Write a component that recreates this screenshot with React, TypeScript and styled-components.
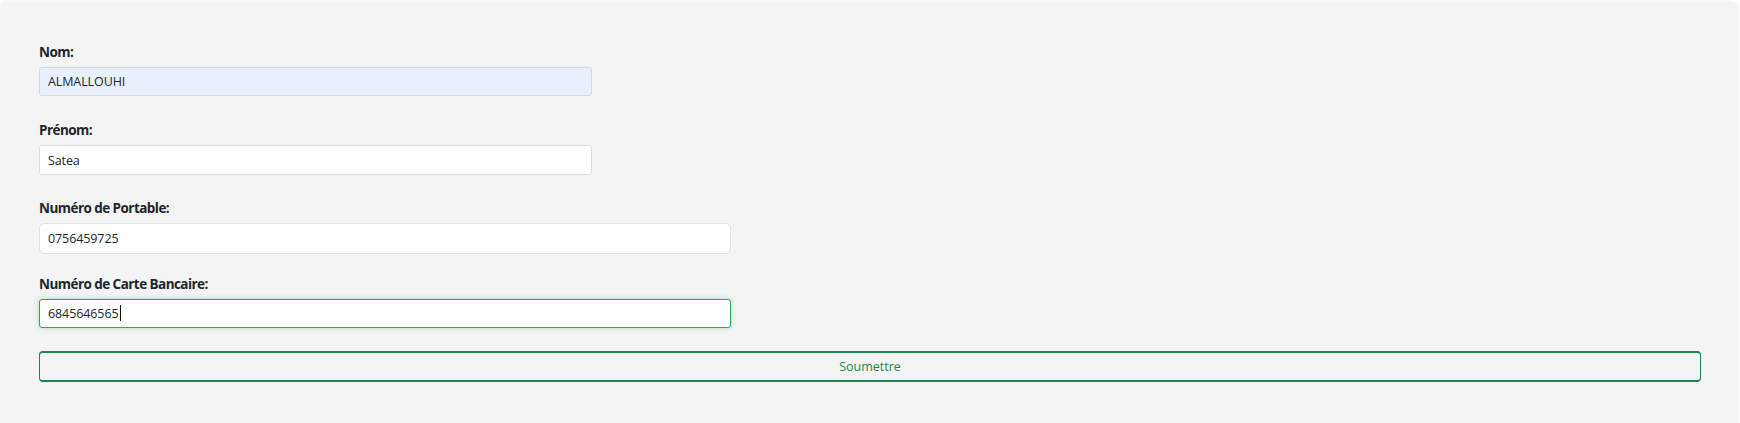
import React from "react";
import styled, { createGlobalStyle, css } from "styled-components";

const Global = createGlobalStyle`
  html, body { margin: 0; padding: 0; background: #ffffff; }
  body { font-family: "Open Sans", "Noto Sans", Arial, sans-serif; color: #212529; }
`;

const Card = styled.div`
  box-sizing: border-box;
  margin: 1px 2px 0 0;
  background: #f4f4f4;
  border-radius: 8px;
  box-shadow: 0 0 3px rgba(0, 0, 0, 0.08);
  padding: 41px 37px 42px 39px;
  min-height: 430px;
`;

const Form = styled.form`
  display: flex;
  flex-direction: column;
`;

const Field = styled.div<{ $gap: number }>`
  display: flex;
  flex-direction: column;
  align-items: flex-start;
  margin-bottom: ${(p) => p.$gap}px;
`;

const Label = styled.label`
  font-family: "Open Sans", "Noto Sans", Arial, sans-serif;
  font-weight: 700;
  font-size: 13.5px;
  line-height: 20px;
  color: #212529;
  margin-bottom: 5px;
  letter-spacing: -0.55px;
`;

const CaretWrap = styled.div`
  position: relative;
`;

const Caret = styled.span`
  position: absolute;
  left: 81px;
  top: 6px;
  width: 1px;
  height: 16px;
  background: #111;
  pointer-events: none;
`;

type Variant = "autofill" | "plain" | "bs" | "focus";

const Input = styled.input<{ $variant: Variant; $w: number; $h: number }>`
  box-sizing: border-box;
  width: ${(p) => p.$w}px;
  height: ${(p) => p.$h}px;
  font-family: "Open Sans", "Noto Sans", Arial, sans-serif;
  font-size: 12.5px;
  color: #212529;
  padding: 0 8px;
  outline: none;
  letter-spacing: -0.1px;
  ${(p) =>
    p.$variant === "autofill" &&
    css`
      background: #e8f0fe;
      border: 1px solid #d6d9de;
      border-radius: 3px;
    `}
  ${(p) =>
    p.$variant === "plain" &&
    css`
      background: #ffffff;
      border: 1px solid #dcdcdc;
      border-radius: 3px;
    `}
  ${(p) =>
    p.$variant === "bs" &&
    css`
      background: #ffffff;
      border: 1px solid #dee2e6;
      border-radius: 5px;
    `}
  ${(p) =>
    p.$variant === "focus" &&
    css`
      background: #ffffff;
      border: 1px solid #2bae4a;
      border-radius: 3px;
      box-shadow: 0 0 5px rgba(40, 167, 69, 0.35);
    `}
`;

const Submit = styled.button`
  box-sizing: border-box;
  width: 100%;
  height: 31px;
  background: transparent;
  border: 1px solid #198754;
  border-width: 2px 1px 2px 1px;
  border-radius: 4px;
  color: #198754;
  font-family: "Open Sans", "Noto Sans", Arial, sans-serif;
  font-size: 12.5px;
  cursor: pointer;
`;

const fields: {
  label: string;
  value: string;
  variant: Variant;
  w: number;
  h: number;
  gap: number;
}[] = [
  { label: "Nom:", value: "ALMALLOUHI", variant: "autofill", w: 553, h: 29, gap: 24 },
  { label: "Prénom:", value: "Satea", variant: "plain", w: 553, h: 30, gap: 23 },
  { label: "Numéro de Portable:", value: "0756459725", variant: "bs", w: 692, h: 31, gap: 20 },
  { label: "Numéro de Carte Bancaire:", value: "6845646565", variant: "focus", w: 692, h: 29, gap: 23 },
];

export default function App() {
  return (
    <>
      <Global />
      <Card>
        <Form onSubmit={(e) => e.preventDefault()}>
          {fields.map((f) => (
            <Field key={f.label} $gap={f.gap}>
              <Label>{f.label}</Label>
              <CaretWrap>
                <Input
                  $variant={f.variant}
                  $w={f.w}
                  $h={f.h}
                  defaultValue={f.value}
                  readOnly
                />
                {f.variant === "focus" && <Caret />}
              </CaretWrap>
            </Field>
          ))}
          <Submit type="submit">Soumettre</Submit>
        </Form>
      </Card>
    </>
  );
}
